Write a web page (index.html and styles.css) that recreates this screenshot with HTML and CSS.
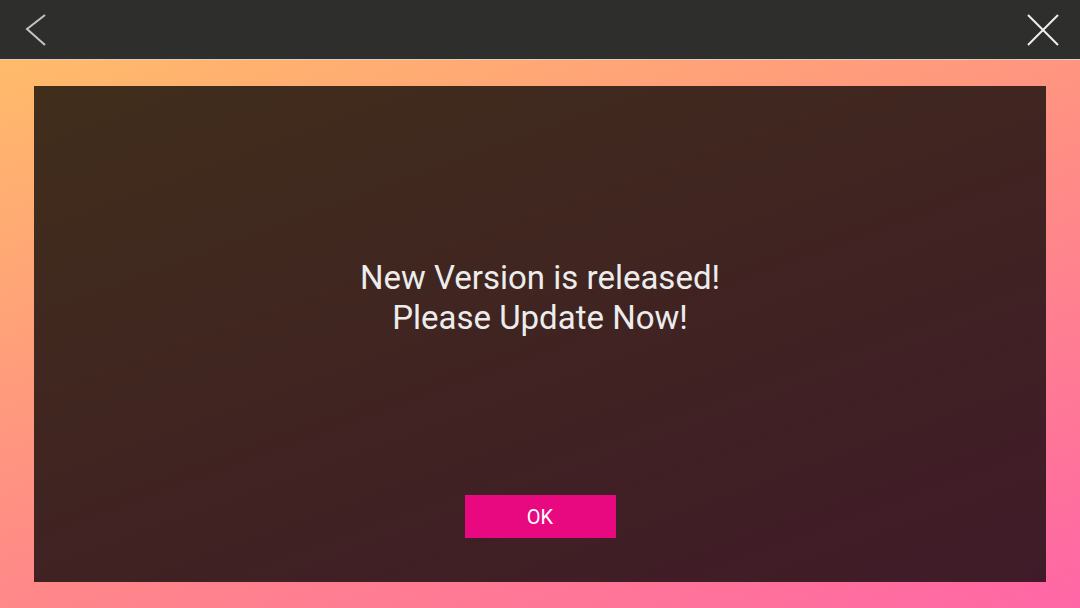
FILE: index.html
```html
<!DOCTYPE html>
<html lang="en">
  <head>
    <meta charset="UTF-8" />
    <meta name="viewport" content="width=device-width, initial-scale=1.0" />
    <title>Update</title>
    <link rel="stylesheet" href="styles.css">
  </head>
  <body>
    <div class="screen">
      <div class="topbar">
        <button class="icon-btn" aria-label="Back">
          <svg width="24" height="36" viewBox="0 0 24 36">
            <polyline points="21,3 3,17 21,33" fill="none" stroke="#c4c4c4" stroke-width="2" />
          </svg>
        </button>
        <button class="icon-btn" aria-label="Close">
          <svg width="34" height="34" viewBox="0 0 34 34">
            <line x1="2" y1="2" x2="32" y2="32" stroke="#f0f0f0" stroke-width="2" />
            <line x1="32" y1="2" x2="2" y2="32" stroke="#f0f0f0" stroke-width="2" />
          </svg>
        </button>
      </div>
      <div class="content">
        <div class="panel">
          <p class="message">New Version is released!<br />Please Update Now!</p>
          <button class="ok-btn" type="button">OK</button>
        </div>
      </div>
    </div>
  </body>
</html>
```

FILE: styles.css
```css
body {
  margin: 0;
  font-family: Roboto, "Liberation Sans", sans-serif;
}
.screen {
  width: 1080px;
  height: 608px;
  display: flex;
  flex-direction: column;
}
.topbar {
  height: 59px;
  background-color: #2e2f2d;
  border-bottom: 1px solid #d9cfc6;
  display: flex;
  align-items: center;
  justify-content: space-between;
  padding: 0 20px 0 24px;
}
.icon-btn {
  background: none;
  border: none;
  padding: 0;
  display: flex;
  cursor: pointer;
}
.content {
  flex: 1;
  padding: 26px 34px;
  background: linear-gradient(160deg, #ffbb6a 0%, #ff8e84 50%, #ff66a6 100%);
  display: flex;
}
.panel {
  flex: 1;
  background-color: rgba(0, 0, 0, 0.75);
  display: flex;
  flex-direction: column;
  align-items: center;
  padding-top: 172px;
  padding-bottom: 44px;
}
.message {
  margin: 0;
  color: #ececec;
  font-size: 33px;
  line-height: 40px;
  text-align: center;
}
.ok-btn {
  margin-top: auto;
  width: 151px;
  height: 43px;
  border: none;
  background-color: #e8087f;
  color: #fff;
  font-family: Roboto, "Liberation Sans", sans-serif;
  font-size: 20px;
  cursor: pointer;
}
```
